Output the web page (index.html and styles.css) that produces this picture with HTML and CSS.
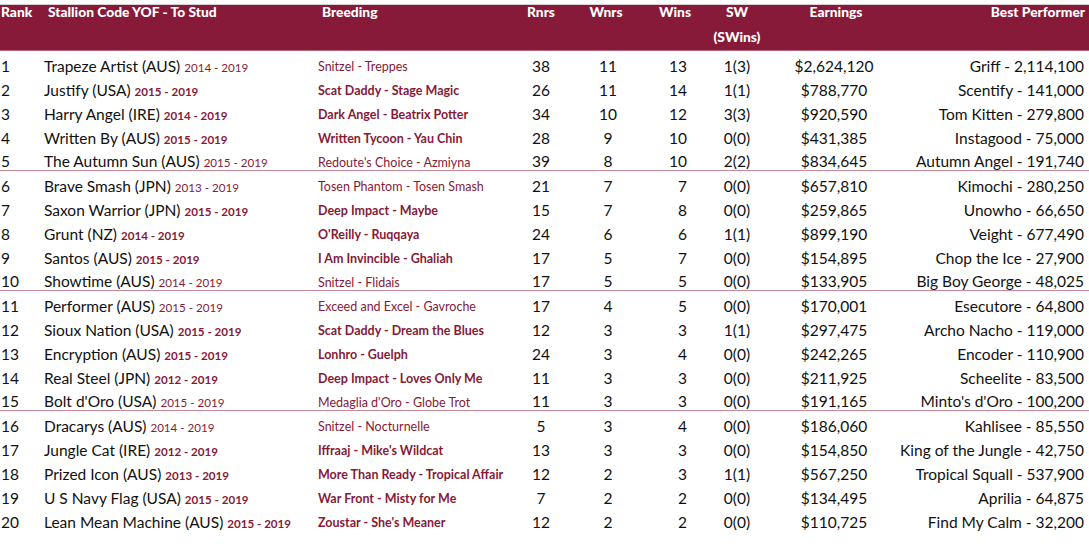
FILE: index.html
```html
<!DOCTYPE html>
<html>
<head>
<meta charset="utf-8">
<link rel="stylesheet" href="styles.css">
</head>
<body>
<div class="topline"></div>
<table class="tbl">
<colgroup>
<col class="c-rank"><col class="c-stal"><col class="c-breed"><col class="c-rnrs"><col class="c-wnrs"><col class="c-wins"><col class="c-sw"><col class="c-earn"><col class="c-best">
</colgroup>
<thead>
<tr>
<th class="h-rank"><div class="l1">Rank</div></th>
<th class="h-stal"><div class="l1">Stallion Code YOF - To Stud</div></th>
<th class="h-breed"><div class="l1">Breeding</div></th>
<th class="h-center"><div class="l1">Rnrs</div></th>
<th class="h-wnrs"><div class="l1">Wnrs</div></th>
<th class="h-wins"><div class="l1">Wins</div></th>
<th class="h-center"><div class="l1">SW</div><div class="l2">(SWins)</div></th>
<th class="h-earn"><div class="l1">Earnings</div></th>
<th class="h-best"><div class="l1">Best Performer</div></th>
</tr>
</thead>
<tbody>
<tr><td>1</td><td>Trapeze Artist (AUS) <span class="yr lt">2014 - 2019</span></td><td class="br lt">Snitzel - Treppes</td><td class="ctr">38</td><td class="ctr">11</td><td class="rt">13</td><td class="ctr">1(3)</td><td class="ctr">$2,624,120</td><td class="best">Griff - 2,114,100</td></tr>
<tr><td>2</td><td>Justify (USA) <span class="yr sb">2015 - 2019</span></td><td class="br sb">Scat Daddy - Stage Magic</td><td class="ctr">26</td><td class="ctr">11</td><td class="rt">14</td><td class="ctr">1(1)</td><td class="ctr">$788,770</td><td class="best">Scentify - 141,000</td></tr>
<tr><td>3</td><td>Harry Angel (IRE) <span class="yr sb">2014 - 2019</span></td><td class="br sb">Dark Angel - Beatrix Potter</td><td class="ctr">34</td><td class="ctr">10</td><td class="rt">12</td><td class="ctr">3(3)</td><td class="ctr">$920,590</td><td class="best">Tom Kitten - 279,800</td></tr>
<tr><td>4</td><td>Written By (AUS) <span class="yr sb">2015 - 2019</span></td><td class="br sb">Written Tycoon - Yau Chin</td><td class="ctr">28</td><td class="ctr">9</td><td class="rt">10</td><td class="ctr">0(0)</td><td class="ctr">$431,385</td><td class="best">Instagood - 75,000</td></tr>
<tr class="sep"><td>5</td><td>The Autumn Sun (AUS) <span class="yr lt">2015 - 2019</span></td><td class="br lt">Redoute's Choice - Azmiyna</td><td class="ctr">39</td><td class="ctr">8</td><td class="rt">10</td><td class="ctr">2(2)</td><td class="ctr">$834,645</td><td class="best">Autumn Angel - 191,740</td></tr>
<tr><td>6</td><td>Brave Smash (JPN) <span class="yr lt">2013 - 2019</span></td><td class="br lt">Tosen Phantom - Tosen Smash</td><td class="ctr">21</td><td class="ctr">7</td><td class="rt">7</td><td class="ctr">0(0)</td><td class="ctr">$657,810</td><td class="best">Kimochi - 280,250</td></tr>
<tr><td>7</td><td>Saxon Warrior (JPN) <span class="yr sb">2015 - 2019</span></td><td class="br sb">Deep Impact - Maybe</td><td class="ctr">15</td><td class="ctr">7</td><td class="rt">8</td><td class="ctr">0(0)</td><td class="ctr">$259,865</td><td class="best">Unowho - 66,650</td></tr>
<tr><td>8</td><td>Grunt (NZ) <span class="yr sb">2014 - 2019</span></td><td class="br sb">O'Reilly - Ruqqaya</td><td class="ctr">24</td><td class="ctr">6</td><td class="rt">6</td><td class="ctr">1(1)</td><td class="ctr">$899,190</td><td class="best">Veight - 677,490</td></tr>
<tr><td>9</td><td>Santos (AUS) <span class="yr sb">2015 - 2019</span></td><td class="br sb">I Am Invincible - Ghaliah</td><td class="ctr">17</td><td class="ctr">5</td><td class="rt">7</td><td class="ctr">0(0)</td><td class="ctr">$154,895</td><td class="best">Chop the Ice - 27,900</td></tr>
<tr class="sep"><td>10</td><td>Showtime (AUS) <span class="yr lt">2014 - 2019</span></td><td class="br lt">Snitzel - Flidais</td><td class="ctr">17</td><td class="ctr">5</td><td class="rt">5</td><td class="ctr">0(0)</td><td class="ctr">$133,905</td><td class="best">Big Boy George - 48,025</td></tr>
<tr><td>11</td><td>Performer (AUS) <span class="yr lt">2015 - 2019</span></td><td class="br lt">Exceed and Excel - Gavroche</td><td class="ctr">17</td><td class="ctr">4</td><td class="rt">5</td><td class="ctr">0(0)</td><td class="ctr">$170,001</td><td class="best">Esecutore - 64,800</td></tr>
<tr><td>12</td><td>Sioux Nation (USA) <span class="yr sb">2015 - 2019</span></td><td class="br sb">Scat Daddy - Dream the Blues</td><td class="ctr">12</td><td class="ctr">3</td><td class="rt">3</td><td class="ctr">1(1)</td><td class="ctr">$297,475</td><td class="best">Archo Nacho - 119,000</td></tr>
<tr><td>13</td><td>Encryption (AUS) <span class="yr sb">2015 - 2019</span></td><td class="br sb">Lonhro - Guelph</td><td class="ctr">24</td><td class="ctr">3</td><td class="rt">4</td><td class="ctr">0(0)</td><td class="ctr">$242,265</td><td class="best">Encoder - 110,900</td></tr>
<tr><td>14</td><td>Real Steel (JPN) <span class="yr sb">2012 - 2019</span></td><td class="br sb">Deep Impact - Loves Only Me</td><td class="ctr">11</td><td class="ctr">3</td><td class="rt">3</td><td class="ctr">0(0)</td><td class="ctr">$211,925</td><td class="best">Scheelite - 83,500</td></tr>
<tr class="sep"><td>15</td><td>Bolt d'Oro (USA) <span class="yr lt">2015 - 2019</span></td><td class="br lt">Medaglia d'Oro - Globe Trot</td><td class="ctr">11</td><td class="ctr">3</td><td class="rt">3</td><td class="ctr">0(0)</td><td class="ctr">$191,165</td><td class="best">Minto's d'Oro - 100,200</td></tr>
<tr><td>16</td><td>Dracarys (AUS) <span class="yr lt">2014 - 2019</span></td><td class="br lt">Snitzel - Nocturnelle</td><td class="ctr">5</td><td class="ctr">3</td><td class="rt">4</td><td class="ctr">0(0)</td><td class="ctr">$186,060</td><td class="best">Kahlisee - 85,550</td></tr>
<tr><td>17</td><td>Jungle Cat (IRE) <span class="yr sb">2012 - 2019</span></td><td class="br sb">Iffraaj - Mike's Wildcat</td><td class="ctr">13</td><td class="ctr">3</td><td class="rt">3</td><td class="ctr">0(0)</td><td class="ctr">$154,850</td><td class="best">King of the Jungle - 42,750</td></tr>
<tr><td>18</td><td>Prized Icon (AUS) <span class="yr sb">2013 - 2019</span></td><td class="br sb">More Than Ready - Tropical Affair</td><td class="ctr">12</td><td class="ctr">2</td><td class="rt">3</td><td class="ctr">1(1)</td><td class="ctr">$567,250</td><td class="best">Tropical Squall - 537,900</td></tr>
<tr><td>19</td><td>U S Navy Flag (USA) <span class="yr sb">2015 - 2019</span></td><td class="br sb">War Front - Misty for Me</td><td class="ctr">7</td><td class="ctr">2</td><td class="rt">2</td><td class="ctr">0(0)</td><td class="ctr">$134,495</td><td class="best">Aprilia - 64,875</td></tr>
<tr><td>20</td><td>Lean Mean Machine (AUS) <span class="yr sb">2015 - 2019</span></td><td class="br sb">Zoustar - She's Meaner</td><td class="ctr">12</td><td class="ctr">2</td><td class="rt">2</td><td class="ctr">0(0)</td><td class="ctr">$110,725</td><td class="best">Find My Calm - 32,200</td></tr>
</tbody>
</table>
</body>
</html>
```

FILE: styles.css
```css
html, body {
  margin: 0;
  padding: 0;
  background: #ffffff;
}
body {
  font-family: "Lato", "Liberation Sans", sans-serif;
  color: #111111;
  width: 1089px;
}
.topline {
  height: 4px;
  border-bottom: 1px solid #d9cdd1;
}
.tbl {
  width: 1089px;
  border-collapse: collapse;
  table-layout: fixed;
}
.c-rank { width: 44px; }
.c-stal { width: 274px; }
.c-breed { width: 192px; }
.c-rnrs { width: 62px; }
.c-wnrs { width: 72px; }
.c-wins { width: 48px; }
.c-sw { width: 90px; }
.c-earn { width: 104px; }
.c-best { width: 203px; }

thead tr {
  background: #861a38;
}
thead th {
  color: #ffffff;
  font-weight: 900;
  font-size: 13.8px;
  height: 45px;
  padding: 0;
  vertical-align: top;
  white-space: nowrap;
  border-bottom: 1px solid #b8667c;
}
.l1 {
  line-height: 14px;
}
.l2 {
  line-height: 14px;
  margin-top: 11px;
}
.h-rank { text-align: left; padding-left: 1px; }
.h-stal { text-align: left; padding-left: 4px; }
.h-breed { text-align: left; padding-left: 4px; }
.h-center { text-align: center; }
.h-wnrs { text-align: center; padding-right: 4px; }
.h-wins { text-align: right; padding-right: 1px; }
.h-earn { text-align: center; padding-left: 4px; }
.h-best { text-align: right; padding-right: 4px; }

tbody td {
  font-size: 15.5px;
  line-height: 18px;
  height: 18px;
  padding: 6px 0 0 0;
  white-space: nowrap;
  vertical-align: top;
}
tbody td:first-child {
  padding-left: 1px;
}
tbody tr.sep td {
  height: 17px;
  line-height: 17px;
  border-bottom: 1px solid #c98b9b;
}
.yr {
  color: #861a38;
  font-size: 11.6px;
  line-height: 12px;
}
tbody td.br {
  color: #861a38;
  font-size: 12.5px;
  padding-top: 8px;
  height: 16px;
  line-height: 16px;
}
tbody tr.sep td.br {
  height: 15px;
  line-height: 15px;
}
.lt { font-weight: 400; }
.sb { font-weight: 700; }
.ctr { text-align: center; }
.rt { text-align: right; padding-right: 5px !important; }
.best { text-align: right; padding-right: 5px !important; }
```
